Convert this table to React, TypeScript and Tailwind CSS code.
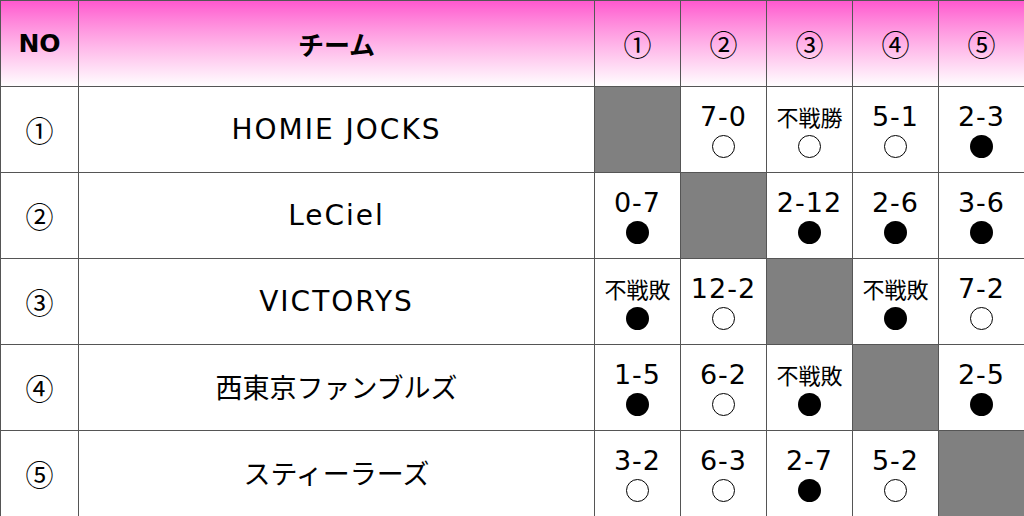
import React from 'react';

type Cell = { score: string; win: boolean } | null;

const teams: { no: string; name: string; latin: boolean; results: Cell[] }[] = [
  {
    no: '①',
    name: 'HOMIE JOCKS',
    latin: true,
    results: [null, { score: '7-0', win: true }, { score: '不戦勝', win: true }, { score: '5-1', win: true }, { score: '2-3', win: false }],
  },
  {
    no: '②',
    name: 'LeCiel',
    latin: true,
    results: [{ score: '0-7', win: false }, null, { score: '2-12', win: false }, { score: '2-6', win: false }, { score: '3-6', win: false }],
  },
  {
    no: '③',
    name: 'VICTORYS',
    latin: true,
    results: [{ score: '不戦敗', win: false }, { score: '12-2', win: true }, null, { score: '不戦敗', win: false }, { score: '7-2', win: true }],
  },
  {
    no: '④',
    name: '西東京ファンブルズ',
    latin: false,
    results: [{ score: '1-5', win: false }, { score: '6-2', win: true }, { score: '不戦敗', win: false }, null, { score: '2-5', win: false }],
  },
  {
    no: '⑤',
    name: 'スティーラーズ',
    latin: false,
    results: [{ score: '3-2', win: true }, { score: '6-3', win: true }, { score: '2-7', win: false }, { score: '5-2', win: true }, null],
  },
];

const font = { fontFamily: '"DejaVu Sans", "Noto Sans CJK JP", sans-serif' };
const cjk = { fontFamily: '"Noto Sans CJK JP", sans-serif' };

const Mark: React.FC<{ win: boolean }> = ({ win }) =>
  win ? (
    <span className="block w-[23px] h-[23px] rounded-full border-[1.5px] border-black" />
  ) : (
    <span className="block w-[23px] h-[23px] rounded-full bg-black" />
  );

const ResultCell: React.FC<{ cell: Cell }> = ({ cell }) => {
  if (!cell) return <td className="border border-[#555] bg-[#808080]" />;
  const isText = !cell.score.includes('-');
  return (
    <td className="border border-[#555] bg-white">
      <div className="flex flex-col items-center justify-center pt-[4px]">
        {isText ? (
          <span className="text-[22px] leading-[29px] h-[29px] text-black" style={cjk}>
            {cell.score}
          </span>
        ) : (
          <span className="text-[27px] leading-[29px] h-[29px] tracking-[1px] text-black">{cell.score}</span>
        )}
        <span className="h-[31px] flex items-center justify-center">
          <Mark win={cell.win} />
        </span>
      </div>
    </td>
  );
};

export default function App() {
  return (
    <div className="w-[1024px] h-[516px] bg-white overflow-hidden" style={font}>
      <table className="table-fixed border-collapse w-[1024px] border border-[#bbb]">
        <colgroup>
          <col className="w-[78px]" />
          <col className="w-[516px]" />
          <col className="w-[86px]" />
          <col className="w-[86px]" />
          <col className="w-[86px]" />
          <col className="w-[86px]" />
          <col className="w-[86px]" />
        </colgroup>
        <thead>
          <tr className="h-[86px] bg-gradient-to-b from-[#ff58cf] to-white">
            <th className="border border-[#555] text-[25px] font-bold text-black">NO</th>
            <th className="border border-[#555] text-[26px] font-bold text-black" style={cjk}>
              チーム
            </th>
            {['①', '②', '③', '④', '⑤'].map((n) => (
              <th key={n} className="border border-[#555] text-[28px] font-normal text-black" style={cjk}>
                {n}
              </th>
            ))}
          </tr>
        </thead>
        <tbody>
          {teams.map((t) => (
            <tr key={t.no} className="h-[86px]">
              <td className="border border-[#555] text-center text-[28px] text-black" style={cjk}>
                {t.no}
              </td>
              {t.latin ? (
                <td className="border border-[#555] text-center text-[28px] tracking-[2px] text-black">{t.name}</td>
              ) : (
                <td className="border border-[#555] text-center text-[27px] text-black" style={cjk}>
                  {t.name}
                </td>
              )}
              {t.results.map((c, i) => (
                <ResultCell key={i} cell={c} />
              ))}
            </tr>
          ))}
        </tbody>
      </table>
    </div>
  );
}
